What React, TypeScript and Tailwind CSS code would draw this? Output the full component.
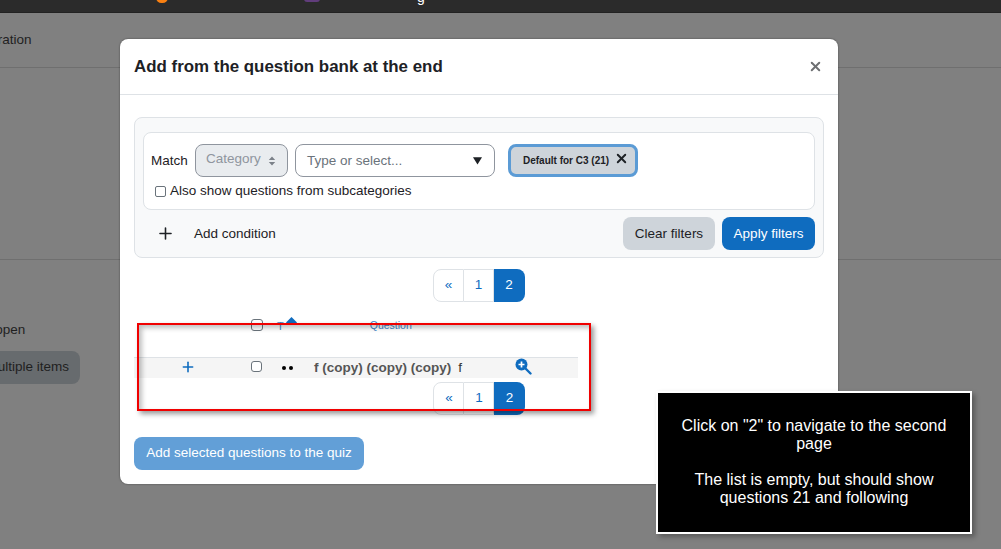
import { Plus, X } from 'lucide-react'

const font = "font-['Liberation_Sans',Arial,sans-serif]"

function Pager() {
  return (
    <div className="flex h-[33px] w-[92px] text-[13.5px]">
      <div className="flex w-[31px] items-center justify-center rounded-l-[8px] border border-[#dee2e6] pl-[1px] text-[#0f6cbf]">«</div>
      <div className="flex w-[30px] items-center justify-center border-y border-r border-[#dee2e6] pl-[1px] text-[#0f6cbf]">1</div>
      <div className="flex w-[31px] items-center justify-center rounded-r-[8px] bg-[#0f6cbf] text-white">2</div>
    </div>
  )
}

function ZoomIcon() {
  return (
    <svg className="-mt-[3px] ml-[53px]" width="17" height="17" viewBox="0 0 17 17">
      <path d="M10.5 10.5 15.5 15.5" stroke="#0f6cbf" strokeWidth="2.4" strokeLinecap="round" />
      <circle cx="6.5" cy="6.5" r="6" fill="#0f6cbf" />
      <path d="M6.5 3.5v6M3.5 6.5h6" stroke="#fff" strokeWidth="1.7" />
    </svg>
  )
}

function FilterBox() {
  return (
    <div className="h-[141px] rounded-[8px] border border-[#dee2e6] bg-[#f8f9fa] px-[8px] pt-[14px]">
      <div className="h-[78px] rounded-[8px] border border-[#dee2e6] bg-white px-[7px] pt-[11px]">
        <div className="flex items-start text-[13.5px] text-[#1d2125]">
          <span className="mt-[7px] w-[44px]">Match</span>
          <div className="flex h-[33px] w-[93px] items-center rounded-[8px] border border-[#8f959e] bg-[#e9ecef] pl-[10px] text-[#8f959e]">
            <span className="-mt-[2px]">Category</span>
            <svg className="ml-[7px]" width="8" height="10" viewBox="0 0 8 10"><path d="M4 0.5 7.2 4H0.8zM4 9.5 0.8 6h6.4z" fill="#7b8189" /></svg>
          </div>
          <div className="ml-[7px] flex h-[33px] w-[200px] items-center justify-between rounded-[8px] border border-[#8f959e] bg-white pl-[11px] pr-[12px] text-[#6a737b]">
            <span className="pt-[1px]">Type or select...</span>
            <svg className="-mt-[1px]" width="9" height="9" viewBox="0 0 10 9"><path d="M0 1h10L5 9z" fill="#1d2125" /></svg>
          </div>
          <div className="ml-[13px] flex h-[33px] w-[130px] items-center rounded-[8px] border-[3px] border-[#5b9bd5] bg-[#ced4da] pl-[12px] text-[10px] font-bold text-[#1d2125]">
            <span className="-mt-[1px]">Default for C3 (21)</span>
            <X className="-mt-[4px] ml-[5px]" size={15} strokeWidth={3} />
          </div>
        </div>
        <label className="mt-[5px] ml-[4px] flex items-center text-[13.5px] leading-[18px] text-[#1d2125]">
          <span className="h-[11px] w-[11px] rounded-[2px] border border-[#6a737b] bg-white" />
          <span className="ml-[4px]">Also show questions from subcategories</span>
        </label>
      </div>
      <div className="mt-[7px] flex items-center text-[13.5px]">
        <Plus className="ml-[13px] text-[#1d2125]" size={19} strokeWidth={2} />
        <span className="ml-[19px] pt-[1px] text-[#1d2125]">Add condition</span>
        <div className="ml-auto flex gap-[7px]">
          <div className="flex h-[33px] w-[92px] items-center justify-center rounded-[8px] bg-[#ced4da] pt-[1px] text-[#1d2125]">Clear filters</div>
          <div className="flex h-[33px] w-[93px] items-center justify-center rounded-[8px] bg-[#0f6cbf] pt-[1px] text-white">Apply filters</div>
        </div>
      </div>
    </div>
  )
}

function QuestionTable() {
  return (
    <div className="relative mt-[16px] h-[114px]">
      {/* header row */}
      <div className="relative flex h-[39px] items-start pt-[1px] text-[11px] text-[#3f85c9]">
        <span className="ml-[117px] h-[12px] w-[12px] rounded-[3px] border border-[#6a737b] bg-white" />
        <span className="ml-[14px] -mt-[1px]">T</span>
        <svg className="-mt-[2px] ml-[2px]" width="11" height="8" viewBox="0 0 11 8"><path d="M5.5 0 11 5.5V8H0V5.5z" fill="#0f6cbf" /></svg>
        <span className="ml-[73px] -mt-[1px] text-[10.5px]">Question</span>
      </div>
      {/* question row */}
      <div className="flex h-[21px] w-[444px] items-center border-t border-[#dee2e6] bg-[#f5f5f5] text-[13.5px]">
        <Plus className="-mt-[3px] ml-[46px] text-[#0f6cbf]" size={16} strokeWidth={2.4} />
        <span className="ml-[55px] h-[11px] w-[11px] -translate-y-[2px] rounded-[3px] border border-[#6a737b] bg-white" />
        <span className="ml-[20px] flex gap-[3px]">
          <span className="h-[4px] w-[4px] rounded-full bg-black" />
          <span className="h-[4px] w-[4px] rounded-full bg-black" />
        </span>
        <span className="ml-[21px] font-bold text-[#555]">f (copy) (copy) (copy)</span>
        <span className="ml-[7px] text-[#333]">f</span>
        <ZoomIcon />
      </div>
      <div className="mt-[4px] ml-[299px]">
        <Pager />
      </div>
      {/* highlight drawn over the table by the tutorial overlay */}
      <div className="absolute left-[3px] top-[5px] h-[88px] w-[454px] border-2 border-[#f00000] shadow-[3px_3px_5px_rgba(0,0,0,0.4),inset_3px_3px_5px_rgba(0,0,0,0.25)]" />
    </div>
  )
}

export default function App() {
  return (
    <div className={`${font} relative h-[549px] w-[1001px] overflow-hidden bg-[#808080]`}>
      {/* page behind the dialog */}
      <div className="relative h-[13px] overflow-hidden border-b border-[#222] bg-[#2b2b2b]">
        <span className="absolute left-[156px] -top-[8px] h-[11px] w-[12px] rounded-full bg-[#f98012]" />
        <span className="absolute left-[304px] -top-[4px] h-[6px] w-[16px] rounded-[3px] bg-[#613d7c]" />
        <span className="absolute left-[417px] -top-[13px] text-[14px] text-white">g</span>
      </div>
      <div className="h-[55px] border-b border-[#6f6f6f] pt-[18px] text-[13.5px] leading-[18px] text-[#1f1f1f]">
        <span className="-ml-[36px] block">Moderation</span>
      </div>
      <div className="mt-[191px] border-t border-[#6f6f6f] pt-[61px] text-[13.5px] text-[#1f1f1f]">
        <span className="-ml-[22px] block leading-[18px]">Reopen</span>
        <div className="-ml-[30px] mt-[12px] flex h-[33px] w-[110px] items-center justify-end rounded-[8px] bg-[#676b6e] pr-[11px] text-[#1f1f1f]">Multiple items</div>
      </div>

      {/* dialog */}
      <div className="absolute left-[120px] top-[39px] h-[445px] w-[718px] rounded-[8px] bg-white shadow-[0_0_2px_rgba(0,0,0,0.5)]">
        <div className="flex h-[56px] items-center justify-between border-b border-[#dee2e6] pl-[14px] pr-[15px]">
          <h2 className="text-[16.9px] font-bold text-[#1d2125]">Add from the question bank at the end</h2>
          <X className="text-[#6d6f72]" size={15} strokeWidth={3.2} />
        </div>
        <div className="px-[14px] pt-[22px]">
          <FilterBox />
          <div className="mt-[11px] flex justify-center pr-[1px]">
            <Pager />
          </div>
          <QuestionTable />
          <div className="mt-[5px] flex h-[33px] w-[230px] items-center justify-center rounded-[8px] bg-[#629fd7] text-[13.5px] text-white">Add selected questions to the quiz</div>
        </div>
      </div>

      {/* tutorial callout */}
      <div className="absolute left-[656px] top-[391px] flex h-[143px] w-[316px] flex-col items-center justify-center border-2 border-white bg-black pb-[2px] text-center text-[16px] leading-[18px] text-white shadow-[3px_3px_5px_rgba(0,0,0,0.3)]">
        <p className="w-[280px]">Click on "2" to navigate to the second page</p>
        <p className="mt-[18px] w-[280px]">The list is empty, but should show questions 21 and following</p>
      </div>
    </div>
  )
}
